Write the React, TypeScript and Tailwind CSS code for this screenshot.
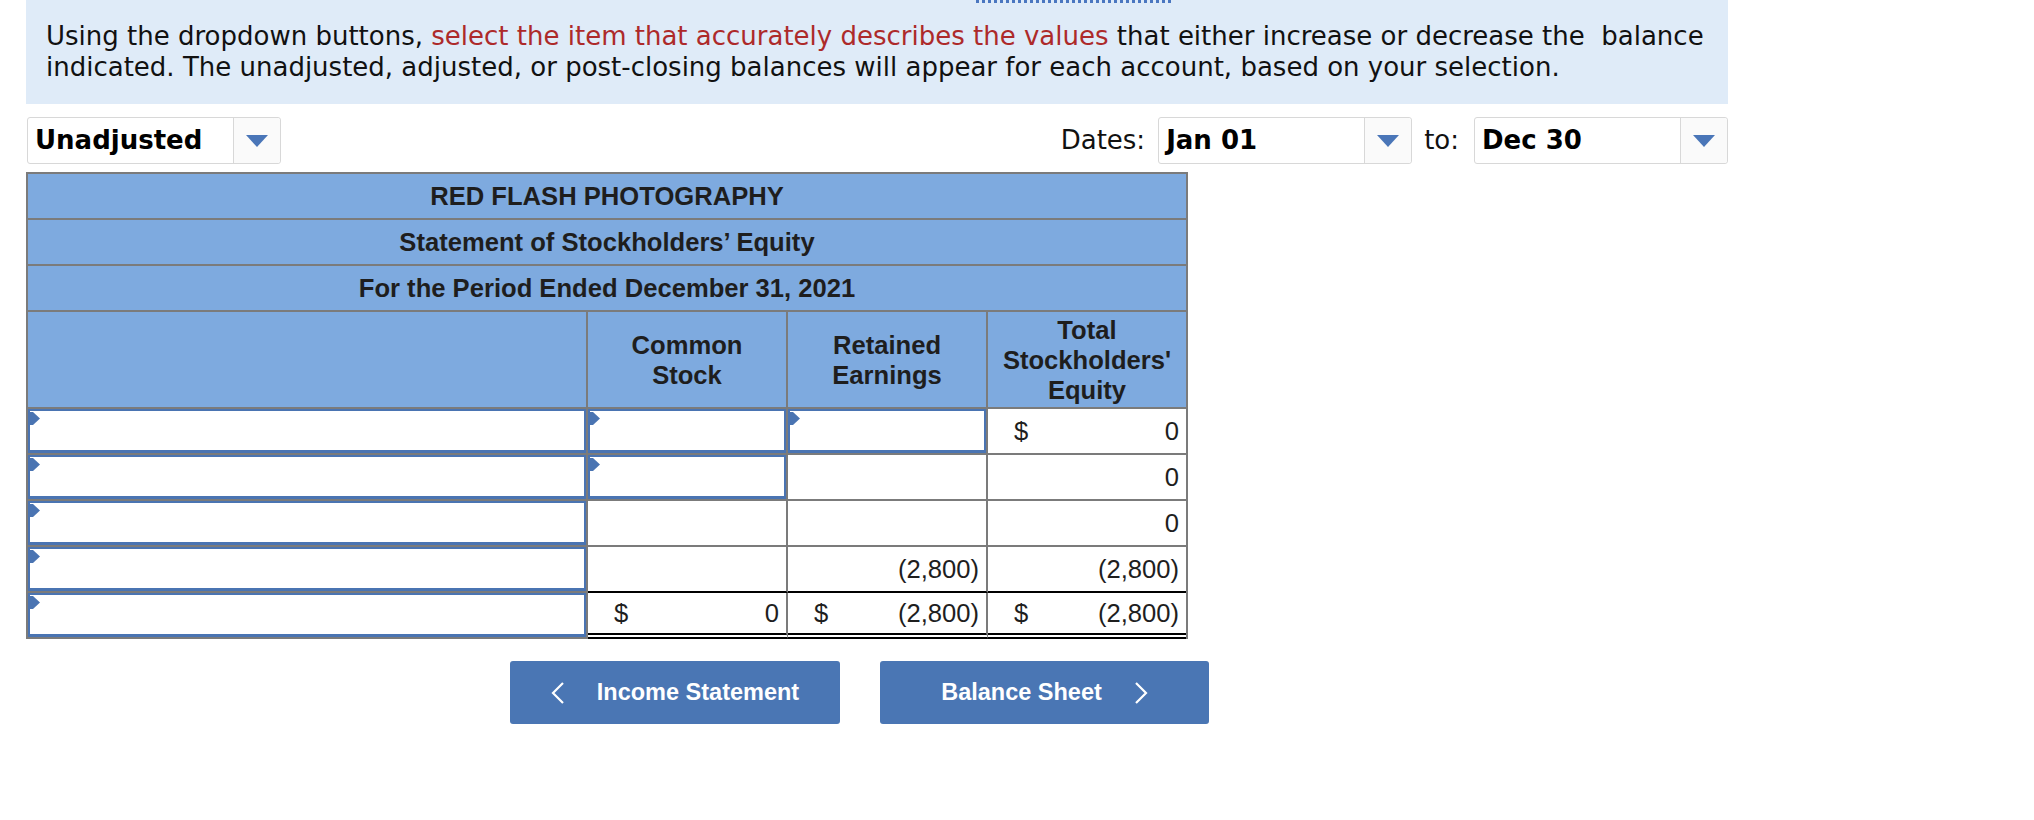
import React from 'react';

type Val = 'input' | '' | [string, string];

interface Row {
  label: 'input';
  common: Val;
  retained: Val;
  total: Val;
}

const rows: Row[] = [
  { label: 'input', common: 'input', retained: 'input', total: ['$', '0'] },
  { label: 'input', common: 'input', retained: '', total: ['', '0'] },
  { label: 'input', common: '', retained: '', total: ['', '0'] },
  { label: 'input', common: '', retained: ['', '(2,800)'], total: ['', '(2,800)'] },
  { label: 'input', common: ['$', '0'], retained: ['$', '(2,800)'], total: ['$', '(2,800)'] },
];

const Flag = () => (
  <svg className="absolute left-0 top-[1px]" width="10" height="13" viewBox="0 0 10 13">
    <path d="M0 0h3l7 6.5L3 13H0z" fill="#4a74b2" />
  </svg>
);

const InputBox = () => (
  <div className="relative h-full w-full border-2 border-b-[3px] border-[#4a74b2] bg-white">
    <Flag />
  </div>
);

const Arrow = () => (
  <svg width="22" height="12" viewBox="0 0 22 12">
    <path d="M0 0h22L11 12z" fill="#4a76b8" />
  </svg>
);

const Select: React.FC<{ value: string }> = ({ value }) => (
  <div className="flex h-[47px] w-[254px] rounded-[3px] border border-[#d8d8d8] bg-white">
    <div className="flex flex-1 items-center pl-[7px] text-[26px] font-bold text-black">{value}</div>
    <div className="flex w-[47px] items-center justify-center rounded-r-[3px] border-l border-[#d8d8d8] bg-[#fafafa]">
      <Arrow />
    </div>
  </div>
);

const Chevron: React.FC<{ dir: 'left' | 'right' }> = ({ dir }) => (
  <svg width="14" height="22" viewBox="0 0 14 22">
    <path
      d={dir === 'left' ? 'M12 1L2 11l10 10' : 'M2 1l10 10L2 21'}
      fill="none"
      stroke="white"
      strokeWidth="2.2"
    />
  </svg>
);

const Cell: React.FC<{ val: Val; border: string }> = ({ val, border }) => {
  if (val === 'input') {
    return (
      <div className={`h-[46px] ${border}`}>
        <InputBox />
      </div>
    );
  }
  return (
    <div className={`flex h-[46px] items-center justify-between pl-[26px] pr-[7px] ${border}`}>
      <span>{val ? val[0] : ''}</span>
      <span>{val ? val[1] : ''}</span>
    </div>
  );
};

const App: React.FC = () => {
  return (
    <div className="min-h-[820px] w-[2034px] bg-white pl-[26px]">
      <div className="w-[1702px] font-['Verdana','DejaVu_Sans',sans-serif]">
        <div className="relative bg-[#dfebf8] pb-[21px] pl-[20px] pr-[10px] pt-[21px] text-[26px] leading-[31px] text-[#111]">
          <div className="absolute left-[950px] top-0 w-[195px] border-t-[3px] border-dotted border-[#4a76c0]" />
          Using the dropdown buttons,{' '}
          <span className="text-[#ad2a2a]">select the item that accurately describes the values</span> that either
          increase or decrease the{'\u00a0'} balance indicated. The unadjusted, adjusted, or post-closing balances will
          appear for each account, based on your selection.
        </div>

        <div className="mt-[13px] flex items-center justify-between pl-[1px]">
          <Select value="Unadjusted" />
          <div className="flex items-center text-[26px] text-[#111]">
            <span className="mr-[13px]">Dates:</span>
            <Select value="Jan 01" />
            <span className="ml-[12px] mr-[15px]">to:</span>
            <Select value="Dec 30" />
          </div>
        </div>
      </div>

      <div className="mt-[8px] w-[1162px] border-x-2 border-t-2 border-[#7b7b7b] font-['Liberation_Sans',Arial,sans-serif] text-[25.6px] text-[#1e1e1e]">
        <div className="flex h-[46px] items-center justify-center border-b-2 border-[#7b7b7b] bg-[#7eaadf] font-bold">
          RED FLASH PHOTOGRAPHY
        </div>
        <div className="flex h-[46px] items-center justify-center border-b-2 border-[#7b7b7b] bg-[#7eaadf] font-bold">
          Statement of Stockholders’ Equity
        </div>
        <div className="flex h-[46px] items-center justify-center border-b-2 border-[#7b7b7b] bg-[#7eaadf] font-bold">
          For the Period Ended December 31, 2021
        </div>

        <div className="grid grid-cols-[560px_200px_200px_198px] bg-[#7eaadf] font-bold leading-[30px]">
          <div className="h-[97px] border-b-2 border-r-2 border-[#7b7b7b]" />
          <div className="flex h-[97px] items-center justify-center border-b-2 border-r-2 border-[#7b7b7b] text-center">
            Common
            <br />
            Stock
          </div>
          <div className="flex h-[97px] items-center justify-center border-b-2 border-r-2 border-[#7b7b7b] text-center">
            Retained
            <br />
            Earnings
          </div>
          <div className="flex h-[97px] items-center justify-center border-b-2 border-[#7b7b7b] text-center">
            Total
            <br />
            Stockholders'
            <br />
            Equity
          </div>
        </div>

        {rows.map((row, i) => {
          const last = i === rows.length - 1;
          const beforeLast = i === rows.length - 2;
          const numBottom = last
            ? 'border-b-[6px] border-double border-b-black'
            : beforeLast
              ? 'border-b-2 border-b-black'
              : 'border-b-2 border-b-[#7b7b7b]';
          return (
            <div key={i} className="grid grid-cols-[560px_200px_200px_198px] bg-white">
              <Cell val={row.label} border="border-b-2 border-r-2 border-[#7b7b7b]" />
              <Cell val={row.common} border={`border-r-2 border-r-[#7b7b7b] ${numBottom}`} />
              <Cell val={row.retained} border={`border-r-2 border-r-[#7b7b7b] ${numBottom}`} />
              <Cell val={row.total} border={numBottom} />
            </div>
          );
        })}
      </div>

      <div className="ml-[484px] mt-[22px] flex gap-[40px] font-['Liberation_Sans',Arial,sans-serif] text-[23.5px] font-bold text-white">
        <button className="flex h-[63px] w-[330px] items-center justify-center gap-[32px] rounded-[3px] bg-[#4a76b4]">
          <Chevron dir="left" />
          <span>Income Statement</span>
        </button>
        <button className="flex h-[63px] w-[329px] items-center justify-center gap-[32px] rounded-[3px] bg-[#4a76b4]">
          <span>Balance Sheet</span>
          <Chevron dir="right" />
        </button>
      </div>
    </div>
  );
};

export default App;
